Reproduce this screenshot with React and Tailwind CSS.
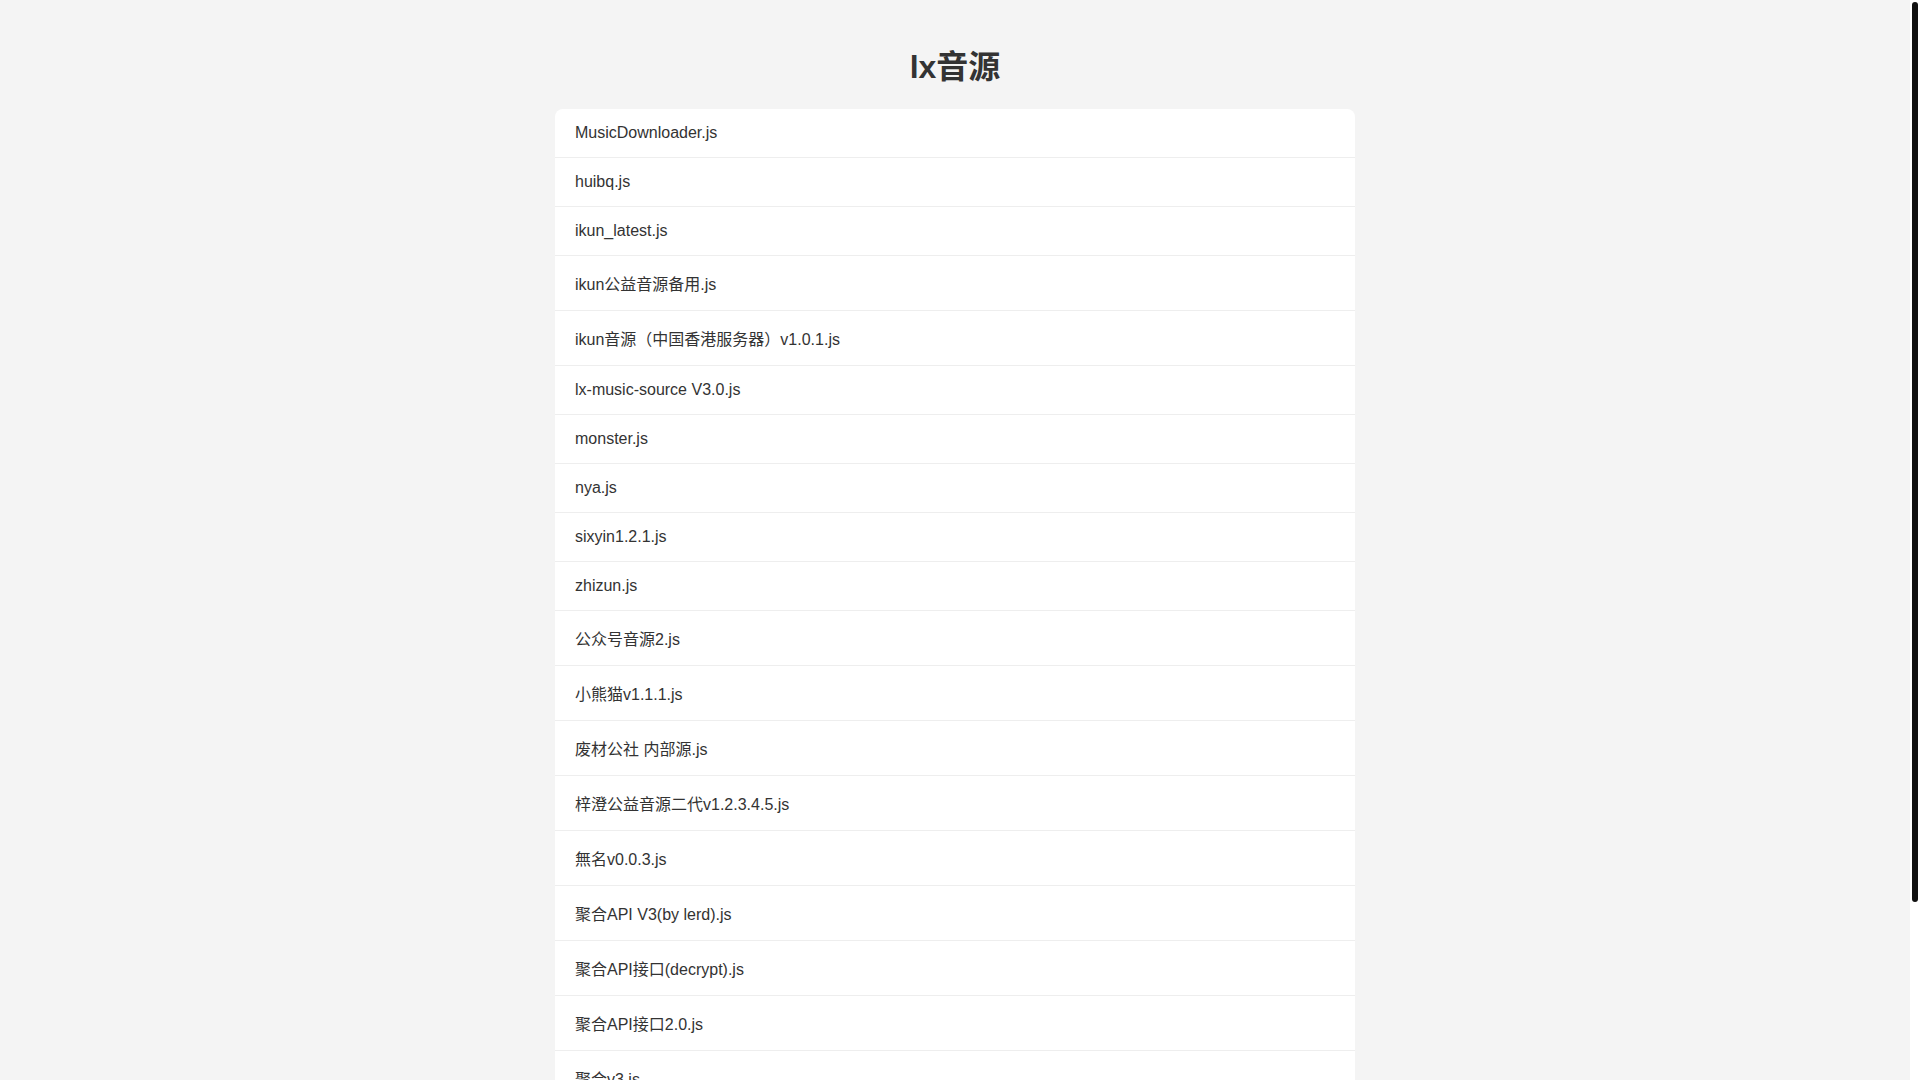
const files = [
  'MusicDownloader.js',
  'huibq.js',
  'ikun_latest.js',
  'ikun公益音源备用.js',
  'ikun音源（中国香港服务器）v1.0.1.js',
  'lx-music-source V3.0.js',
  'monster.js',
  'nya.js',
  'sixyin1.2.1.js',
  'zhizun.js',
  '公众号音源2.js',
  '小熊猫v1.1.1.js',
  '废材公社 内部源.js',
  '梓澄公益音源二代v1.2.3.4.5.js',
  '無名v0.0.3.js',
  '聚合API V3(by lerd).js',
  '聚合API接口(decrypt).js',
  '聚合API接口2.0.js',
  '聚合v3.js',
  '落雪音源.js',
  '野草音源.js',
  '长青SVIP.js',
];

function App() {
  return (
    <div className="flex h-screen bg-[#f4f4f4]">
      <div className="min-w-0 flex-1 overflow-y-auto [scrollbar-width:none]">
        <div className="p-5 text-[#333] font-['Liberation_Sans','Noto_Sans_CJK_SC',sans-serif]">
          <h1 className="my-[21.44px] text-center text-[32px] font-bold leading-[normal]">
            lx音源
          </h1>
          <ul className="mx-auto max-w-[800px] overflow-hidden rounded-lg bg-white">
            {files.map((name) => (
              <li
                key={name}
                className="border-b border-[#eeeeee] px-5 py-[15px] text-base leading-[normal] last:border-b-0"
              >
                {name}
              </li>
            ))}
          </ul>
        </div>
      </div>
      {/* scrollbar track */}
      <div className="w-[10px] shrink-0 bg-white px-[2px] pt-[2px]">
        <div className="h-[900px] w-[6px] rounded-[3px] bg-[#111111]" />
      </div>
    </div>
  );
}

export default App;
